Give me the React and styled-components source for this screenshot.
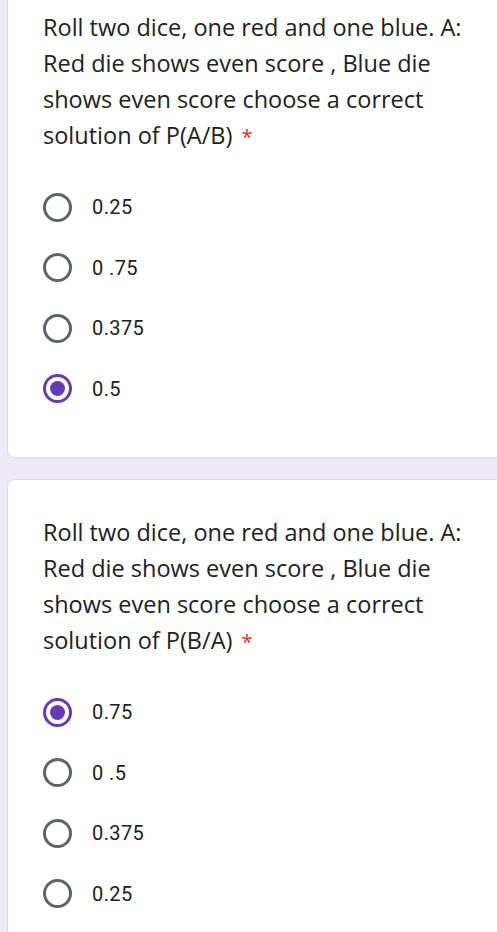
import React from 'react';
import styled, { createGlobalStyle } from 'styled-components';

const GlobalStyle = createGlobalStyle`
  html, body {
    margin: 0;
    padding: 0;
    background: #ede9f6;
    overflow: hidden;
  }
`;

const Page = styled.div`
  display: flex;
  flex-direction: column;
  gap: 21px;
  padding-left: 7px;
  margin-right: -20px;
  font-family: Roboto, 'Noto Sans', sans-serif;
  color: #202124;
`;

const Card = styled.div`
  background: #fff;
  border: 1px solid #dadce0;
  border-radius: 8px;
  padding: ${({ $cut }) => ($cut ? '9px' : '34px')} 0 38px 35px;
  ${({ $cut }) => $cut && `
    border-top: none;
    border-top-left-radius: 0;
    border-top-right-radius: 0;
  `}
`;

const Question = styled.div`
  font-family: 'Open Sans', Roboto, sans-serif;
  font-size: 23.5px;
  line-height: 36px;
  width: 440px;
`;

const Star = styled.span`
  color: #d93025;
  padding-left: 9px;
  font-size: 20px;
`;

const Options = styled.div`
  margin-top: 22px;
  display: flex;
  flex-direction: column;
`;

const Option = styled.div`
  height: 60.5px;
  display: flex;
  align-items: center;
  gap: 20px;
`;

const Radio = styled.span`
  box-sizing: border-box;
  width: 29px;
  height: 29px;
  border-radius: 50%;
  border: 3px solid ${({ $on }) => ($on ? '#673ab7' : '#5f6368')};
  display: flex;
  align-items: center;
  justify-content: center;

  &::after {
    content: '';
    width: 15px;
    height: 15px;
    border-radius: 50%;
    background: ${({ $on }) => ($on ? '#673ab7' : 'transparent')};
  }
`;

const Label = styled.span`
  font-size: 20px;
  letter-spacing: 0.4px;
`;

const questions = [
  {
    text: 'Roll two dice, one red and one blue. A: Red die shows even score , Blue die shows even score choose a correct solution of P(A/B)',
    options: ['0.25', '0 .75', '0.375', '0.5'],
    picked: 3,
    cut: true,
  },
  {
    text: 'Roll two dice, one red and one blue. A: Red die shows even score , Blue die shows even score choose a correct solution of P(B/A)',
    options: ['0.75', '0 .5', '0.375', '0.25'],
    picked: 0,
  },
];

export default function App() {
  return (
    <>
      <GlobalStyle />
      <Page>
        {questions.map((q, i) => (
          <Card key={i} $cut={q.cut}>
            <Question>
              {q.text}
              <Star>*</Star>
            </Question>
            <Options>
              {q.options.map((o, j) => (
                <Option key={j}>
                  <Radio $on={j === q.picked} />
                  <Label>{o}</Label>
                </Option>
              ))}
            </Options>
          </Card>
        ))}
      </Page>
    </>
  );
}
